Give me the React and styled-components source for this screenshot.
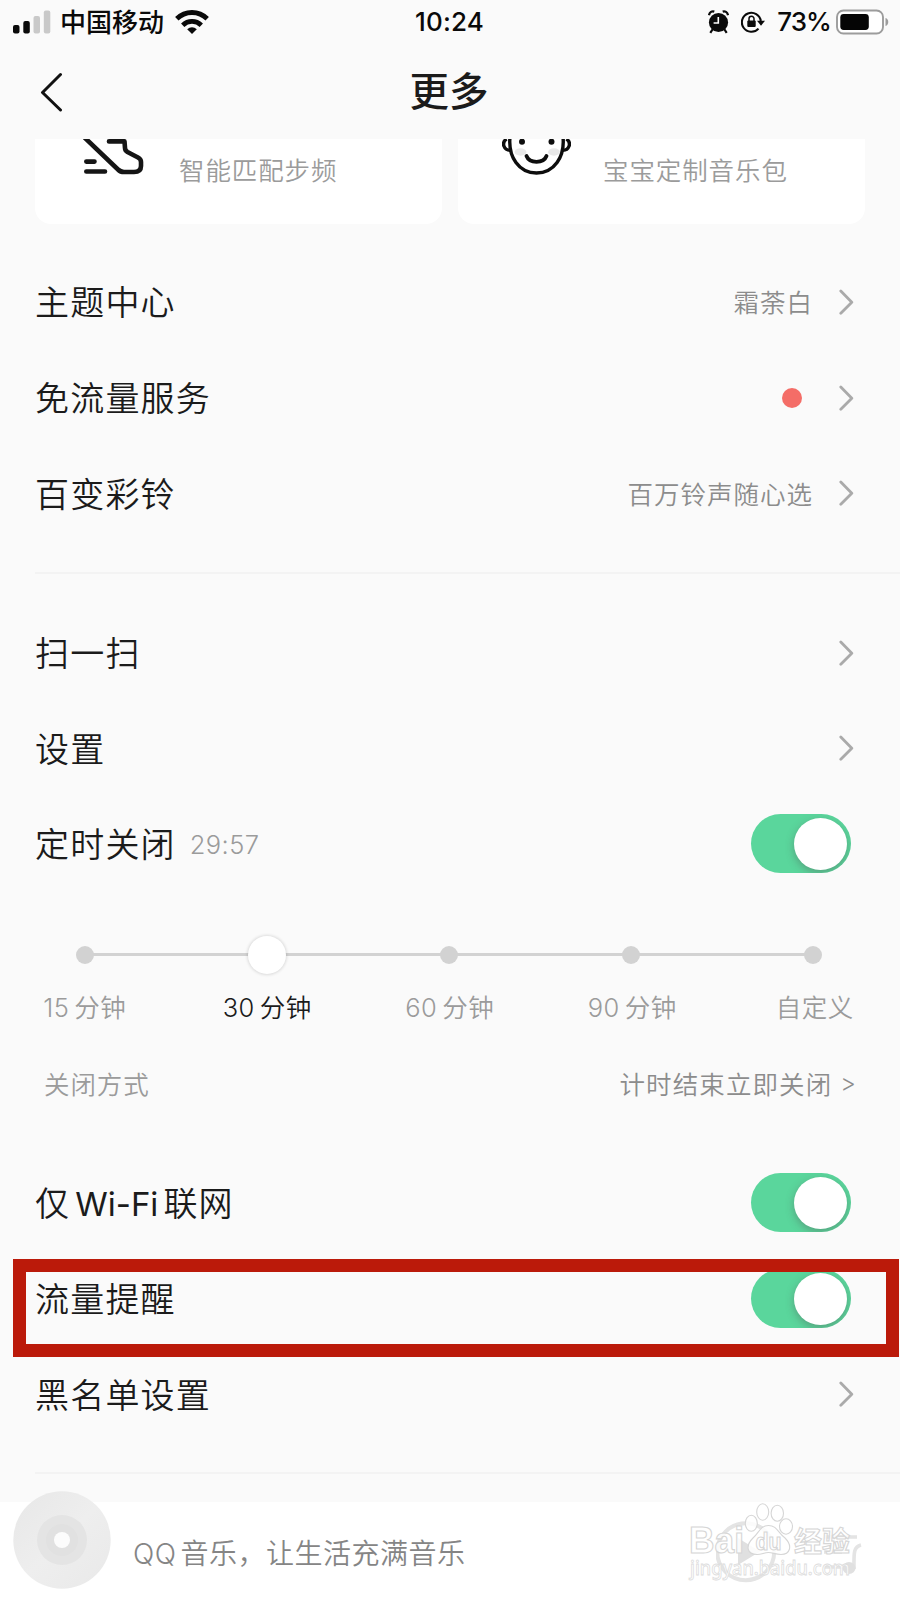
import React from 'react';
import styled, { createGlobalStyle } from 'styled-components';

const Global = createGlobalStyle`
  *, *::before, *::after { box-sizing: border-box; }
  body { margin: 0; background: #fafafa; }
`;

const Screen = styled.main`
  position: relative;
  display: flex;
  flex-direction: column;
  width: 900px;
  height: 1600px;
  overflow: hidden;
  background: #fafafa;
  color: #1b1b1b;
  font-family: Inter, "Noto Sans CJK SC", sans-serif;
  white-space: nowrap;
  svg { display: block; flex: none; }
`;

const StatusBar = styled.header`
  display: grid;
  grid-template-columns: 1fr auto 1fr;
  align-items: center;
  height: 42px;
  padding: 0 11px 0 13px;
  color: #0a0a0a;
  font-size: 26px;
  font-weight: 500;
  line-height: 44px;
`;

const StatusGroup = styled.div`
  display: flex;
  align-items: center;
  justify-content: ${(p) => (p.$end ? 'flex-end' : 'flex-start')};
  height: 42px;
`;

const Carrier = styled.span`
  margin: 0 11px 0 9px;
  font-size: 26px;
  line-height: 46px;
  padding-top: 1px;
`;

const Clock = styled.span`
  margin-right: 3px;
  font-size: 26px;
  letter-spacing: 0.2px;
`;

const Percent = styled.span`
  margin: 0 5px 0 12px;
  font-size: 26px;
  letter-spacing: -0.9px;
`;

const TitleBar = styled.div`
  display: grid;
  grid-template-columns: 1fr auto 1fr;
  align-items: center;
  height: 97px;
  padding: 0 38px 0 36px;
`;

const Title = styled.h1`
  margin: 0;
  padding-top: 3px;
  font-size: 39.5px;
  font-weight: 500;
  line-height: 94px;
`;

const Scroller = styled.section`
  display: flex;
  flex-direction: column;
  height: 1363px;
  overflow: hidden;
`;

const Cards = styled.div`
  display: grid;
  grid-template-columns: 407px 407px;
  gap: 16px;
  height: 85px;
  padding-left: 35px;
`;

const Card = styled.article`
  display: flex;
  height: 85px;
  padding-left: ${(p) => p.$pad}px;
  border-radius: 0 0 16px 16px;
  background: #fff;
`;

const CardText = styled.span`
  margin-left: ${(p) => p.$gap}px;
  padding-top: 13px;
  color: #9b9b9b;
  font-size: 25.5px;
  font-weight: 350;
  letter-spacing: 0.9px;
  line-height: 38px;
`;

const Group = styled.div`
  padding-top: ${(p) => p.$top}px;
`;

const Row = styled.div`
  position: relative;
  display: flex;
  align-items: center;
  justify-content: space-between;
  height: 95.7px;
  padding: 0 ${(p) => (p.$toggle ? 49 : 46)}px 0 35px;
`;

const Label = styled.span`
  display: flex;
  align-items: center;
  padding-top: 3px;
  font-size: 34px;
  font-weight: 350;
  letter-spacing: 1.2px;
  line-height: 50px;
`;

const Latin = styled.span`
  margin: -1px 5px 0;
  font-size: 33px;
  font-weight: 400;
  letter-spacing: 0;
`;

const Remaining = styled.span`
  margin: -1px 0 0 14px;
  color: #9b9b9b;
  font-size: 25.5px;
  font-weight: 350;
  letter-spacing: 0.4px;
`;

const Trailing = styled.div`
  display: flex;
  align-items: center;
  gap: 26px;
`;

const Value = styled.span`
  margin-top: -2px;
  color: #8c8c8c;
  font-size: 25.5px;
  font-weight: 350;
  letter-spacing: 1px;
`;

const Dot = styled.i`
  width: 20px;
  height: 20px;
  margin-right: 11px;
  border-radius: 50%;
  background: #f46d67;
`;

const Divider = styled.hr`
  width: 865px;
  height: 2px;
  margin: ${(p) => p.$top}px 0 0 35px;
  border: 0;
  background: #f3f3f3;
`;

const Switch = styled.button`
  display: flex;
  justify-content: flex-end;
  align-items: center;
  width: 100px;
  height: 59px;
  padding: 0 4px;
  border: 0;
  border-radius: 30px;
  background: #5ad69c;
  overflow: hidden;
`;

const Knob = styled.i`
  width: 53px;
  height: 52px;
  border-radius: 50%;
  background: #fff;
  box-shadow: 0 3px 9px rgba(80, 80, 80, 0.4);
`;

const Timer = styled.div`
  height: 171px;
  padding-top: 43px;
`;

const Track = styled.div`
  display: flex;
  align-items: center;
  justify-content: space-between;
  width: 746px;
  height: 40px;
  margin-left: 76px;
  background: linear-gradient(#d2d2d2, #d2d2d2) center / 728px 3px no-repeat;
`;

const Stop = styled.i`
  width: ${(p) => (p.$active ? 38 : 18)}px;
  height: ${(p) => (p.$active ? 38 : 18)}px;
  margin: 0 ${(p) => (p.$active ? -10 : 0)}px;
  border-radius: 50%;
  background: ${(p) => (p.$active ? '#fff' : '#d2d2d2')};
  box-shadow: ${(p) => (p.$active ? '0 0 3px 1px rgba(0,0,0,.12)' : 'none')};
`;

const Times = styled.div`
  display: grid;
  grid-template-columns: repeat(5, 182.5px);
  margin: 13px 0 0 -6.5px;
`;

const Time = styled.span`
  display: flex;
  justify-content: center;
  gap: 5px;
  color: ${(p) => (p.$active ? '#1b1b1b' : '#9b9b9b')};
  font-size: 25.5px;
  font-weight: 350;
  letter-spacing: 0.5px;
  line-height: 40px;
`;

const CloseMode = styled.div`
  display: flex;
  align-items: center;
  justify-content: space-between;
  height: 40px;
  padding: 0 44px 0 44px;
`;

const CloseText = styled.span`
  color: #9b9b9b;
  font-size: 25.5px;
  font-weight: 350;
  letter-spacing: 0.9px;
`;

const CloseValue = styled(CloseText)`
  display: flex;
  align-items: center;
  gap: 8px;
  color: #8c8c8c;
  letter-spacing: 1.1px;
`;

const Arrow = styled.span`
  padding-top: 1px;
  font-size: 24px;
  letter-spacing: 0;
`;

const Highlight = styled.div`
  position: absolute;
  top: 8px;
  left: 13px;
  width: 886px;
  height: 98px;
  border: 13px solid #bb1a0a;
`;

const Player = styled.footer`
  position: relative;
  display: flex;
  height: 98px;
  padding-left: 13px;
  background: #fff;
`;

const DiscIcon = styled.svg`
  margin-top: -11px;
`;

const Slogan = styled.span`
  display: flex;
  gap: 4px;
  flex: 1;
  margin-left: 22px;
  padding-top: 31px;
  color: #858585;
  font-size: 28px;
  font-weight: 350;
  letter-spacing: 0.5px;
  line-height: 42px;
`;

const Controls = styled.svg`
  margin: 5px 30px 0 0;
`;

const Watermark = styled.svg`
  position: absolute;
  top: 0;
  right: 20px;
`;

const Signal = () => (
  <svg width="38" height="24" viewBox="0 0 38 24">
    <rect x="0" y="15" width="6.5" height="8.5" rx="2" fill="#0a0a0a" />
    <rect x="10.3" y="11" width="6.5" height="12.5" rx="2" fill="#0a0a0a" />
    <rect x="20.5" y="6" width="6.5" height="17.5" rx="2" fill="#c9c9c9" />
    <rect x="30.8" y="0.5" width="6.5" height="23" rx="2" fill="#c9c9c9" />
  </svg>
);

const Wifi = () => (
  <svg width="34" height="24" viewBox="0 0 34 24" fill="none" stroke="#0a0a0a" strokeWidth="4.8">
    <path d="M1.8 8.8 C10.2 0.4 23.8 0.4 32.2 8.8" />
    <path d="M7.7 15.2 C13 10.2 21 10.2 26.3 15.2" />
    <path d="M17 24 L12.2 19.3 C15 16.6 19 16.6 21.8 19.3 Z" fill="#0a0a0a" stroke="none" />
  </svg>
);

const Alarm = () => (
  <svg width="21" height="24" viewBox="0 0 21 24">
    <circle cx="10.5" cy="12.5" r="9.6" fill="#0a0a0a" />
    <path d="M1 5.2 C1.5 2.1 4 0.8 6.3 1.6 M20 5.2 C19.5 2.1 17 0.8 14.7 1.6" stroke="#0a0a0a" strokeWidth="2.2" fill="none" />
    <path d="M4.5 19.5 L2.3 22.8 M16.5 19.5 L18.7 22.8" stroke="#0a0a0a" strokeWidth="2.2" />
    <path d="M10.3 7 V13 H5.6" stroke="#fff" strokeWidth="1.6" fill="none" />
  </svg>
);

const LockIcon = styled.svg`
  margin-left: 12px;
`;

const RotationLock = () => (
  <LockIcon width="24" height="24" viewBox="0 0 24 24">
    <path d="M19.8 11 A9.5 9.5 0 1 0 17.5 18.6" stroke="#0a0a0a" strokeWidth="2.1" fill="none" />
    <path d="M16 10.8 H24 L20 15.8 Z" fill="#0a0a0a" />
    <rect x="6.3" y="10.6" width="8.4" height="6.5" rx="1" fill="#0a0a0a" />
    <path d="M8 11 V8.8 A2.5 2.5 0 0 1 13 8.8 V11" stroke="#0a0a0a" strokeWidth="1.5" fill="none" />
  </LockIcon>
);

const Battery = () => (
  <svg width="53" height="26" viewBox="0 0 53 26">
    <rect x="1" y="1.5" width="46" height="23" rx="6.5" fill="#fff" stroke="#9c9c9c" strokeWidth="1.9" />
    <rect x="4.3" y="5" width="28.5" height="16" rx="3.4" fill="#050505" />
    <path d="M49.5 9 C53.2 9.8 53.2 16.2 49.5 17 Z" fill="#9c9c9c" />
  </svg>
);

const Back = () => (
  <svg width="28" height="42" viewBox="-2 0 28 42" fill="none" stroke="#111" strokeWidth="3" strokeLinecap="round" strokeLinejoin="round">
    <path d="M22.5 4.5 L4.5 22.5 L22.5 40" />
  </svg>
);

const Chevron = () => (
  <svg width="15" height="26" viewBox="0 0 15 26" fill="none" stroke="#aaa" strokeWidth="2.8" strokeLinecap="round" strokeLinejoin="round">
    <path d="M1.8 2 L12.8 13.2 L1.8 24.2" />
  </svg>
);

const Shoe = () => (
  <svg width="62" height="40" viewBox="0 0 62 40" fill="none" stroke="#151515" strokeWidth="4.6" strokeLinecap="round" strokeLinejoin="round">
    <path d="M1 -2 L35 30.5 Q37.5 33 41 33 H51 Q58 33 58 27 V23 Q58 20 55 18.5 L44.5 13 Q42 11.5 42 9 L41.5 2.4 H26" />
    <path d="M3.3 22.6 H11.5 M3.3 32.5 H22" />
  </svg>
);

const Baby = () => (
  <svg width="69" height="40" viewBox="0 0 69 40" fill="none">
    <ellipse cx="18.5" cy="13" rx="6" ry="3.7" fill="#e8e8e8" />
    <ellipse cx="52" cy="13" rx="6" ry="3.7" fill="#e8e8e8" />
    <g stroke="#0d0d0d" strokeWidth="3.4">
      <path d="M8 -2 C6 18 17 34 34.5 34 C52 34 63 18 61 -2" />
      <path d="M4.5 0 C-1 4 2 11.5 8.5 11.3 M64.5 0 C70 4 67 11.5 60.5 11.3" />
      <path d="M24.5 17 C27.5 24.7 41.5 24.7 44.5 17" strokeWidth="3.8" strokeLinecap="round" />
    </g>
    <circle cx="20" cy="2.7" r="3" fill="#0d0d0d" />
    <circle cx="49.5" cy="2.7" r="3" fill="#0d0d0d" />
  </svg>
);

const Disc = () => (
  <DiscIcon width="98" height="98" viewBox="0 0 98 98">
    <defs>
      <linearGradient id="vinyl" x1="0" y1="0" x2="1" y2="1">
        <stop offset="0" stopColor="#e7e7e7" />
        <stop offset="0.5" stopColor="#eeeeee" />
        <stop offset="1" stopColor="#e9e9e9" />
      </linearGradient>
    </defs>
    <circle cx="49" cy="49" r="48.7" fill="url(#vinyl)" />
    <circle cx="49" cy="49" r="25" fill="#e4e4e4" />
    <circle cx="49" cy="49" r="16" fill="#e1e1e1" />
    <circle cx="49" cy="49" r="8" fill="#fcfcfc" />
  </DiscIcon>
);

const PlayerControls = () => (
  <Controls width="154" height="84" viewBox="0 0 154 84" fill="none">
    <circle cx="29.7" cy="44.7" r="28.5" stroke="#e4e4e4" strokeWidth="4" />
    <path d="M22 31 V58 L44 44.5 Z" fill="#e0e0e0" />
    <path d="M108 30 H141 M108 45 H126 M108 60 H126" stroke="#e4e4e4" strokeWidth="3.6" />
    <path d="M145 38 C137 40 138 47 138 62" stroke="#e4e4e4" strokeWidth="3.6" />
    <ellipse cx="133" cy="61" rx="6.5" ry="6" fill="#e0e0e0" />
  </Controls>
);

const Brand = () => (
  <Watermark width="200" height="98" viewBox="0 0 200 98" fill="#fff" stroke="#d6d6d6" strokeWidth="1.1" fillOpacity="0.85">
    <g fontFamily="'Liberation Sans', 'Noto Sans CJK SC', sans-serif" fontWeight="700">
      <text x="9" y="51" fontSize="36" textLength="55" lengthAdjust="spacingAndGlyphs">Bai</text>
      <ellipse cx="71.3" cy="21.3" rx="6" ry="8" />
      <ellipse cx="82.7" cy="10" rx="6" ry="8.2" />
      <ellipse cx="97.3" cy="11.3" rx="6.2" ry="8" />
      <ellipse cx="106" cy="24.5" rx="6.5" ry="7.7" />
      <path d="M88.5 23.5 C97 23.5 98 31 105 36 C113 44 110 52.5 101 52.5 C95 52.5 93 50.5 88.5 50.5 C84 50.5 82 52.5 77 52.5 C67 52.5 65 44 73 36 C79 31 80 23.5 88.5 23.5 Z" />
      <text x="75.5" y="47.5" fontSize="23" textLength="26" lengthAdjust="spacingAndGlyphs">du</text>
      <text x="114" y="50" fontSize="28" textLength="56" lengthAdjust="spacingAndGlyphs">经验</text>
      <text x="10" y="73" fontSize="19" fontWeight="500" fontFamily="'Noto Sans', sans-serif" strokeWidth="0.8" stroke="#dcdcdc" textLength="160" lengthAdjust="spacingAndGlyphs">jingyan.baidu.com</text>
    </g>
  </Watermark>
);

const Nav = ({ label, value, dot }) => (
  <Row>
    <Label>{label}</Label>
    <Trailing>
      {value && <Value>{value}</Value>}
      {dot && <Dot />}
      <Chevron />
    </Trailing>
  </Row>
);

const Toggle = ({ label, remaining, children }) => (
  <Row $toggle>
    <Label>
      {label}
      {remaining && <Remaining>{remaining}</Remaining>}
    </Label>
    <Switch><Knob /></Switch>
    {children}
  </Row>
);

const options = [
  { n: '15', unit: '分钟' },
  { n: '30', unit: '分钟', active: true },
  { n: '60', unit: '分钟' },
  { n: '90', unit: '分钟' },
  { unit: '自定义' },
];

export default function App() {
  return (
    <Screen>
      <Global />
      <StatusBar>
        <StatusGroup><Signal /><Carrier>中国移动</Carrier><Wifi /></StatusGroup>
        <Clock>10:24</Clock>
        <StatusGroup $end><Alarm /><RotationLock /><Percent>73%</Percent><Battery /></StatusGroup>
      </StatusBar>
      <TitleBar><Back /><Title>更多</Title></TitleBar>
      <Scroller>
        <Cards>
          <Card $pad={48}><Shoe /><CardText $gap={34}>智能匹配步频</CardText></Card>
          <Card $pad={44}><Baby /><CardText $gap={32}>宝宝定制音乐包</CardText></Card>
        </Cards>
        <Group $top={30}>
          <Nav label="主题中心" value="霜荼白" />
          <Nav label="免流量服务" dot />
          <Nav label="百变彩铃" value="百万铃声随心选" />
        </Group>
        <Divider $top={31} />
        <Group $top={30.6}>
          <Nav label="扫一扫" />
          <Nav label="设置" />
          <Toggle label="定时关闭" remaining="29:57" />
        </Group>
        <Timer>
          <Track>{options.map((o) => <Stop key={o.n || o.unit} $active={o.active} />)}</Track>
          <Times>
            {options.map((o) => (
              <Time key={o.n || o.unit} $active={o.active}>
                {o.n && <span>{o.n}</span>}
                <span>{o.unit}</span>
              </Time>
            ))}
          </Times>
        </Timer>
        <CloseMode>
          <CloseText>关闭方式</CloseText>
          <CloseValue>计时结束立即关闭<Arrow>&gt;</Arrow></CloseValue>
        </CloseMode>
        <Group $top={52.4}>
          <Toggle label={<>仅<Latin>Wi-Fi</Latin>联网</>} />
          <Toggle label="流量提醒"><Highlight /></Toggle>
          <Nav label="黑名单设置" />
        </Group>
        <Divider $top={30} />
      </Scroller>
      <Player>
        <Disc />
        <Slogan><span>QQ</span><span>音乐，让生活充满音乐</span></Slogan>
        <PlayerControls />
        <Brand />
      </Player>
    </Screen>
  );
}
